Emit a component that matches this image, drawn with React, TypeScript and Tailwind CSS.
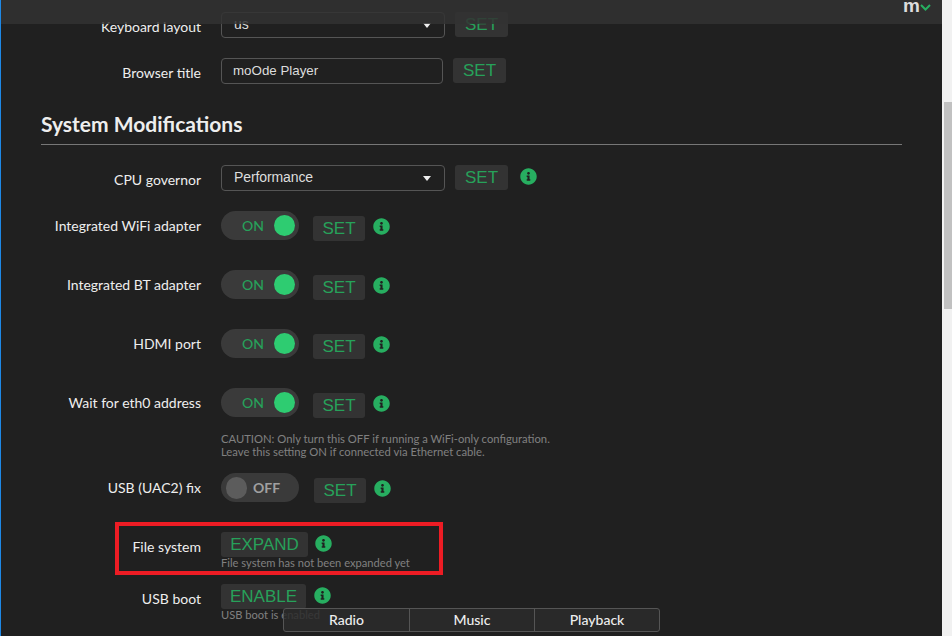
import React from 'react'
import { FaInfoCircle } from 'react-icons/fa'

const lato = "font-['Lato','Noto_Sans',sans-serif]"
const arial = "font-['Liberation_Sans',Arial,sans-serif]"

const Label = ({ children, top = 0 }: { children: React.ReactNode; top?: number }) => (
  <div className="w-[200px] shrink-0 text-right text-[14px] leading-[20px] text-[#eeeeee]" style={{ paddingTop: top }}>
    {children}
  </div>
)

const GreenButton = ({ children, className = '' }: { children: React.ReactNode; className?: string }) => (
  <button className={`${arial} flex h-[25px] items-center justify-center rounded-[3px] bg-[#333333] text-[17px] leading-none text-[#27a15a] ${className}`}>
    {children}
  </button>
)

const Info = ({ className = '' }: { className?: string }) => (
  <FaInfoCircle className={`h-[17px] w-[17px] shrink-0 text-[#27ae60] ${className}`} />
)

const Caret = () => (
  <svg width="10" height="5" viewBox="0 0 10 5" className="text-[#eeeeee]">
    <path d="M1 0h8L5 5z" fill="currentColor" />
  </svg>
)

const Select = ({ value }: { value: string }) => (
  <div className={`${arial} flex h-[26px] w-[224px] items-center justify-between rounded-[4px] border border-[#555555] pl-[12px] pr-[12px] text-[14px] tracking-[-0.1px] text-[#dddddd]`}>
    <span className="-mt-[2px]">{value}</span>
    <Caret />
  </div>
)

const Toggle = ({ on }: { on: boolean }) => (
  <div className="flex h-[29px] w-[78px] items-center rounded-full bg-[#3a3a3a]">
    {on ? (
      <>
        <span className="ml-[21px] text-[14px] font-medium text-[#27a15a]">ON</span>
        <span className="ml-auto mr-[4px] h-[21px] w-[21px] rounded-full bg-[#2ecc71]" />
      </>
    ) : (
      <>
        <span className="ml-[5px] h-[22px] w-[21px] rounded-full bg-[#5c5c5c]" />
        <span className="ml-[6px] text-[14px] font-bold text-[#a0a0a0]">OFF</span>
      </>
    )}
  </div>
)

const ToggleRow = ({ label, on = true, className = '' }: { label: string; on?: boolean; className?: string }) => (
  <div className={`flex h-[29px] items-start ${className}`}>
    <Label top={5}>{label}</Label>
    <div className="ml-[20px] flex items-start">
      <Toggle on={on} />
      <GreenButton className={`mt-[5px] w-[52px] ${on ? 'ml-[14px]' : 'ml-[15px]'}`}>SET</GreenButton>
      <Info className="mt-[7px] ml-[8px]" />
    </div>
  </div>
)

export default function App() {
  return (
    <div className={`${lato} flex h-[636px] w-[952px] overflow-hidden bg-[#f1f1f1]`}>
      <div className="relative h-full w-[942px] overflow-hidden border-l border-[#1e88e5] bg-[#202020]">
        {/* config form, scrolled down */}
        <div className="pt-[12px]">
          <div className="flex items-start">
            <Label top={5}>Keyboard layout</Label>
            <div className="ml-[20px] flex items-start">
              <Select value="us" />
              <GreenButton className="ml-[10px] w-[53px]">SET</GreenButton>
            </div>
          </div>

          <div className="mt-[20px] flex items-start">
            <Label top={5}>Browser title</Label>
            <div className="ml-[20px] flex items-start">
              <div className={`${arial} flex h-[26px] w-[222px] items-center rounded-[4px] border border-[#555555] pl-[11px] text-[13.33px] text-[#dddddd]`}>
                <span>moOde Player</span>
              </div>
              <GreenButton className="ml-[10px] w-[53px]">SET</GreenButton>
            </div>
          </div>

          <h2 className="ml-[40px] mr-[40px] mt-[26px] border-b border-[#777777] pb-[6px] text-[21px] font-bold leading-[28px] text-[#eeeeee]">
            System Modifications
          </h2>

          <div className="mt-[20px] flex items-start">
            <Label top={5}>CPU governor</Label>
            <div className="ml-[20px] flex items-start">
              <Select value="Performance" />
              <GreenButton className="ml-[10px] w-[53px]">SET</GreenButton>
              <Info className="mt-[3px] ml-[12px]" />
            </div>
          </div>

          <ToggleRow label="Integrated WiFi adapter" className="mt-[20px]" />
          <ToggleRow label="Integrated BT adapter" className="mt-[30px]" />
          <ToggleRow label="HDMI port" className="mt-[30px]" />
          <ToggleRow label="Wait for eth0 address" className="mt-[30px]" />

          <p className="ml-[220px] mt-[15px] text-[11.25px] leading-[13px] text-[#808080]">
            CAUTION: Only turn this OFF if running a WiFi-only configuration.
            <br />
            Leave this setting ON if connected via Ethernet cable.
          </p>

          <ToggleRow label="USB (UAC2) fix" on={false} className="mt-[15px]" />

          <div className="relative mt-[30px] flex h-[39px] items-start">
            <Label top={5}>File system</Label>
            <div className="ml-[20px]">
              <div className="flex items-start">
                <GreenButton className="w-[87px]">EXPAND</GreenButton>
                <Info className="mt-[3px] ml-[7px]" />
              </div>
              <p className="-mt-[1px] text-[11.15px] leading-[13px] text-[#808080]">File system has not been expanded yet</p>
            </div>
            {/* red annotation drawn over the screenshot */}
            <div className="absolute left-[114px] top-[-10px] h-[53px] w-[328px] border-[4px] border-[#ed1c24]" />
          </div>

          <div className="mt-[13px] flex items-start">
            <Label top={5}>USB boot</Label>
            <div className="ml-[20px]">
              <div className="flex items-start">
                <GreenButton className="w-[85px]">ENABLE</GreenButton>
                <Info className="mt-[3px] ml-[8px]" />
              </div>
              <p className="-mt-[1px] text-[11.15px] leading-[13px] text-[#808080]">USB boot is enabled</p>
            </div>
          </div>
        </div>

        {/* translucent header */}
        <div className="absolute inset-x-0 top-0 flex h-[24px] items-start justify-end bg-[#333333]/85 pr-[11px]">
          <span className={`${arial} -mt-[1px] text-[19px] font-bold leading-[14px] text-[#dddddd]`}>m</span>
          <svg width="11" height="8" viewBox="0 0 11 8" className="mt-[3px]">
            <path d="M1 2l4.5 4.5L10 2" fill="none" stroke="#27ae60" strokeWidth="2" />
          </svg>
        </div>

        {/* bottom tabs */}
        <div className="absolute left-[282px] top-[608px] flex h-[24px] w-[377px] rounded-[3px] border border-[#555555] bg-[#2b2b2b]/85 pb-[2px] text-[14px] font-medium text-[#eeeeee]">
          <div className="-mb-[2px] flex w-[126px] items-center justify-center border-r border-[#555555] pb-[2px]">Radio</div>
          <div className="-mb-[2px] flex w-[125px] items-center justify-center border-r border-[#555555] pb-[2px]">Music</div>
          <div className="flex flex-1 items-center justify-center">Playback</div>
        </div>
      </div>

      {/* page scrollbar */}
      <div className="h-full w-[10px] pl-[2px] pt-[102px]">
        <div className="h-[207px] w-full bg-[#c1c1c1]" />
      </div>
    </div>
  )
}
